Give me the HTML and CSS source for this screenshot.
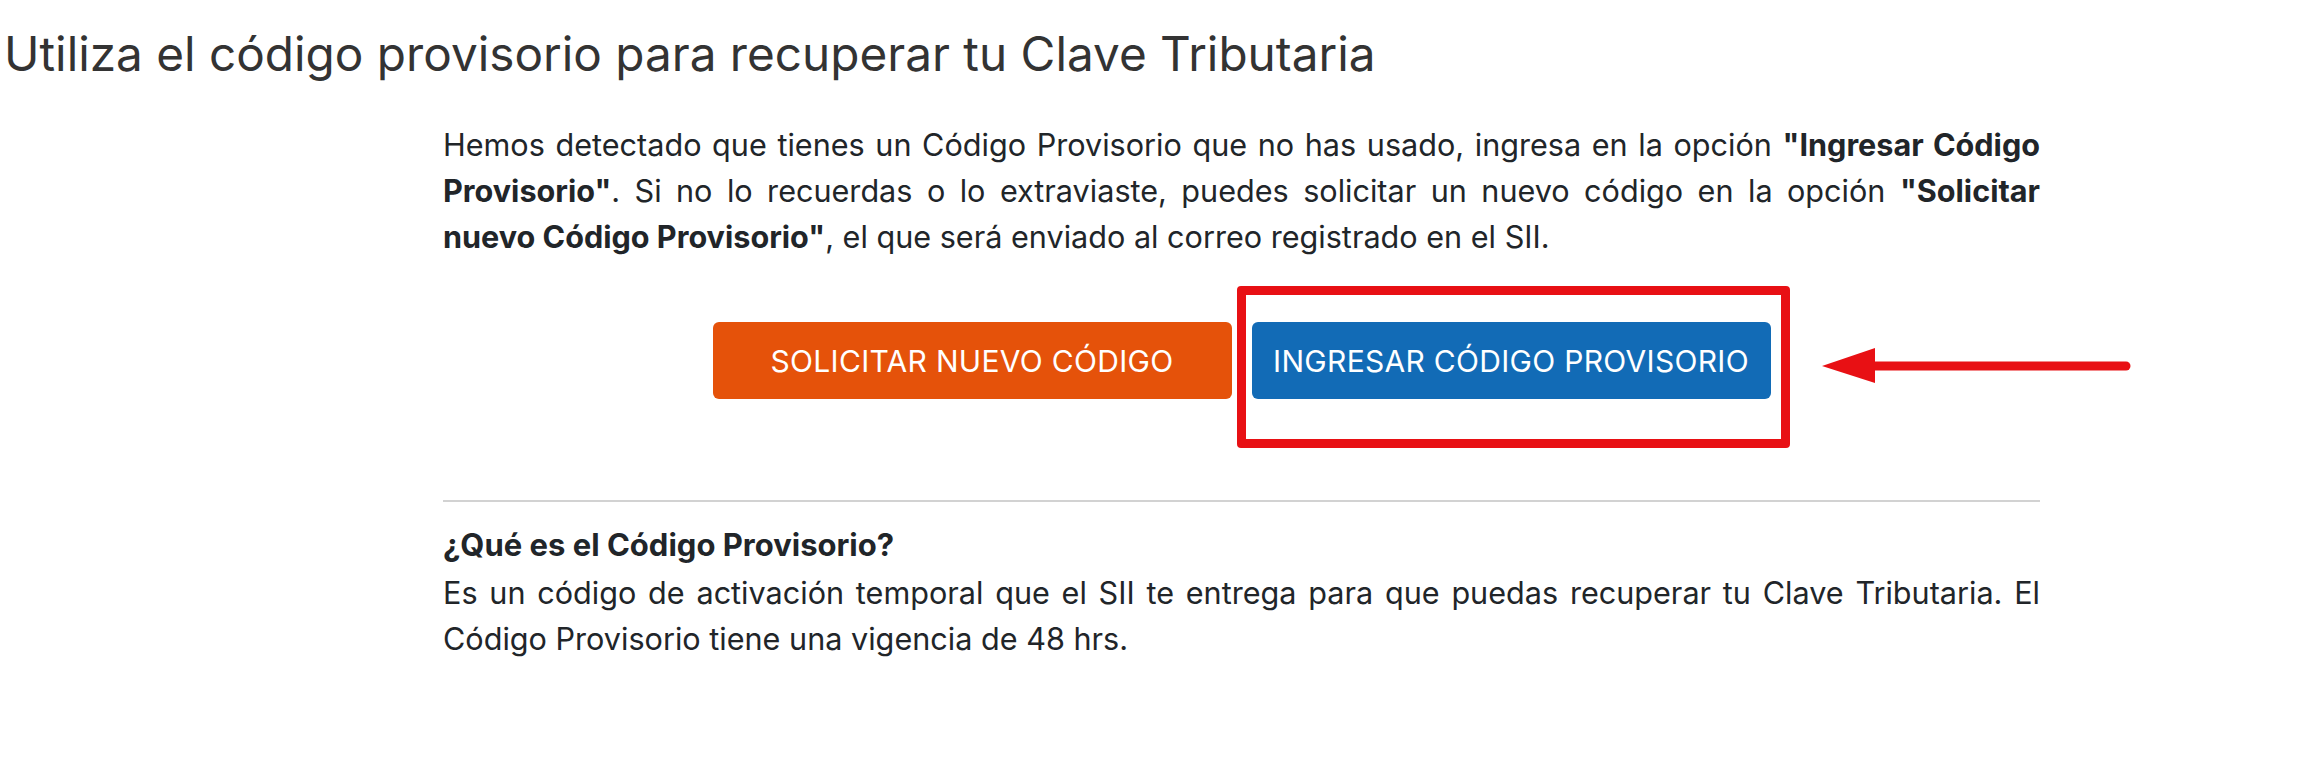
FILE: index.html
```html
<!DOCTYPE html>
<html lang="es">
<head>
<meta charset="utf-8">
<title>Código Provisorio</title>
<link rel="stylesheet" href="styles.css">
</head>
<body>
<h1 class="page-title">Utiliza el código provisorio para recuperar tu Clave Tributaria</h1>
<main class="layout">
  <section class="content">
    <p class="intro">Hemos detectado que tienes un Código Provisorio que no has usado, ingresa en la opción <strong>"Ingresar Código Provisorio"</strong>. Si no lo recuerdas o lo extraviaste, puedes solicitar un nuevo código en la opción <strong>"Solicitar nuevo Código Provisorio"</strong>, el que será enviado al correo registrado en el SII.</p>
    <div class="actions">
      <button class="btn btn-orange" type="button">SOLICITAR NUEVO CÓDIGO</button>
      <div class="highlight">
        <button class="btn btn-blue" type="button">INGRESAR CÓDIGO PROVISORIO</button>
        <span class="highlight-box"></span>
        <svg class="arrow" width="312" height="40" viewBox="0 0 312 40" aria-hidden="true">
          <line x1="52" y1="20" x2="306" y2="20" stroke="#e81014" stroke-width="9" stroke-linecap="round"/>
          <polygon points="2,20 55,2 55,37" fill="#e81014"/>
        </svg>
      </div>
    </div>
    <hr class="divider">
    <h2 class="faq-title">¿Qué es el Código Provisorio?</h2>
    <p class="faq-text">Es un código de activación temporal que el SII te entrega para que puedas recuperar tu Clave Tributaria. El Código Provisorio tiene una vigencia de 48 hrs.</p>
  </section>
</main>
</body>
</html>
```
FILE: styles.css
```css
html, body {
  margin: 0;
  padding: 0;
  background: #ffffff;
}

body {
  font-family: Inter, "Noto Sans", "Liberation Sans", sans-serif;
  color: #212529;
}

.page-title {
  margin: 24px 0 0 4px;
  font-size: 47.7px;
  line-height: 60px;
  font-weight: 400;
  color: #333333;
}

.layout {
  display: flex;
  padding-left: 443px;
}

.content {
  width: 1597px;
}

.intro {
  margin: 38px 0 0;
  font-size: 30.6px;
  line-height: 46px;
  text-align: justify;
}

.intro strong {
  font-weight: 700;
}

.actions {
  margin-top: 62px;
  display: flex;
  justify-content: center;
  gap: 20px;
}

.btn {
  width: 519px;
  height: 77px;
  border: 0;
  border-radius: 6px;
  font-family: Inter, "Noto Sans", "Liberation Sans", sans-serif;
  font-size: 30px;
  letter-spacing: 0.3px;
  font-weight: 400;
  color: #ffffff;
  display: flex;
  align-items: center;
  justify-content: center;
  padding: 0;
}

.btn-orange {
  background: #e5520a;
}

.btn-blue {
  background: #126bb6;
}

.highlight {
  position: relative;
}

.highlight-box {
  position: absolute;
  left: -15px;
  right: -19px;
  top: -36px;
  bottom: -49px;
  border: 9px solid #e81014;
  border-radius: 4px;
}

.arrow {
  position: absolute;
  left: 568px;
  top: 24px;
}

.divider {
  margin: 101px 0 0;
  border: 0;
  border-top: 2px solid #d2d2d2;
  height: 0;
}

.faq-title {
  margin: 20px 0 2px;
  font-size: 31px;
  line-height: 46px;
  font-weight: 700;
}

.faq-text {
  margin: 0;
  font-size: 30.6px;
  line-height: 46px;
  text-align: justify;
}
```
